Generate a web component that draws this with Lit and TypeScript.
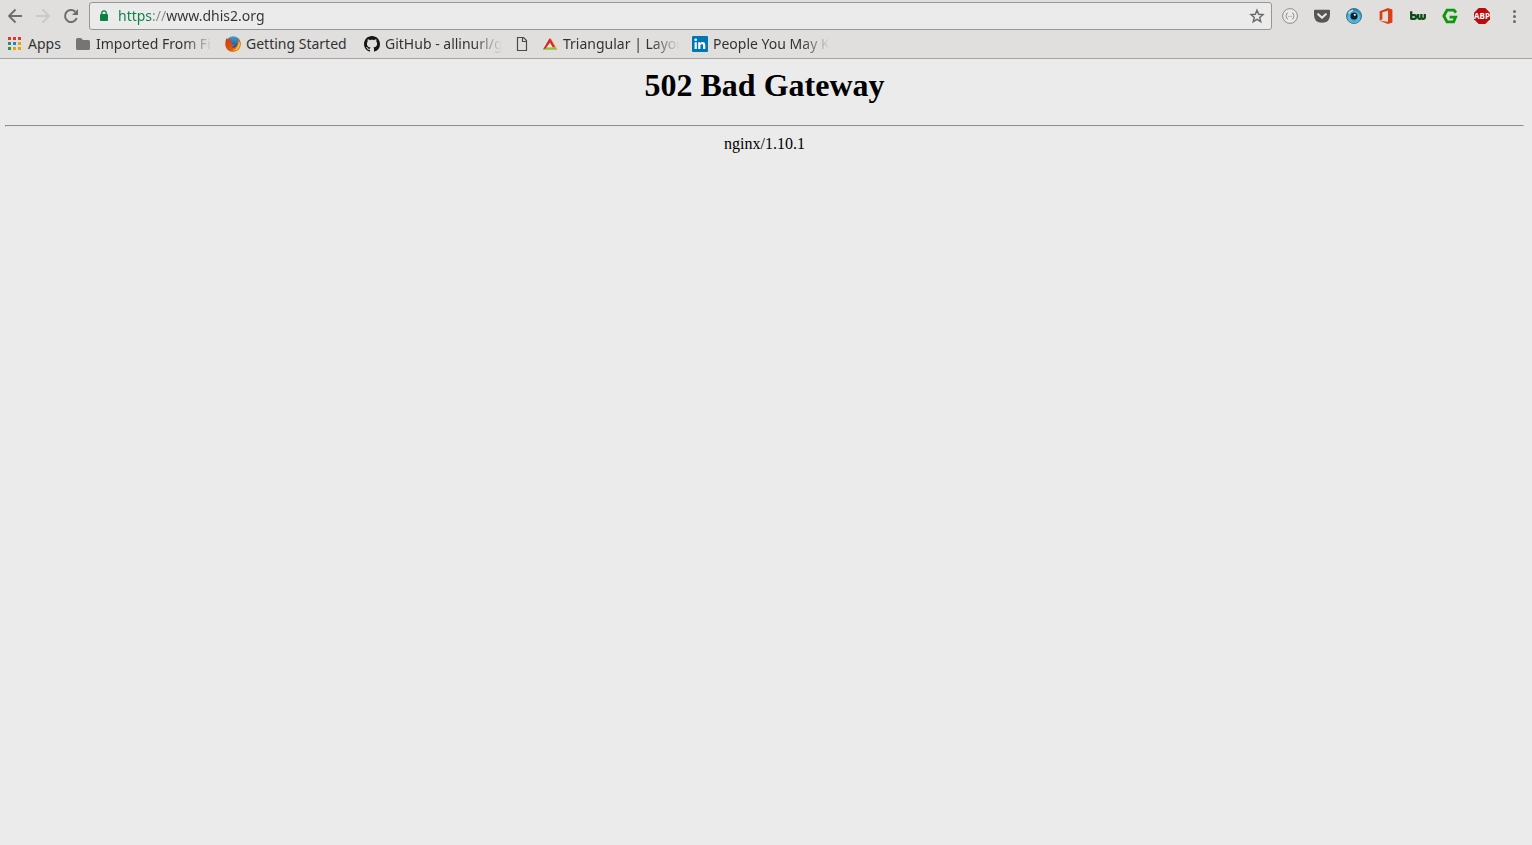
import { LitElement, html, css, svg, nothing, TemplateResult } from "lit";
import { customElement, property } from "lit/decorators.js";

const icon = (body: unknown, size = 16) =>
  html`<svg width=${size} height=${size} viewBox="0 0 ${size} ${size}" aria-hidden="true">${body}</svg>`;

const back = icon(svg`<path d="M15 8H2.2M8.5 1.5L2 8L8.5 14.5" fill="none" stroke="#6e6e6e" stroke-width="1.9"/>`);
const forward = icon(svg`<path d="M1 8H13.8M7.5 1.5L14 8L7.5 14.5" fill="none" stroke="#cbc9c8" stroke-width="1.9"/>`);
const reload = icon(svg`
  <path d="M13.7 10A6 6 0 1 1 12.3 3.8" fill="none" stroke="#6e6e6e" stroke-width="2"/>
  <path d="M15 1V7H9Z" fill="#6e6e6e"/>`);
const lock = icon(svg`
  <rect x="4" y="6" width="8" height="7" rx="1" fill="#0b8043"/>
  <path d="M5.8 6.5V5a2.2 2.2 0 0 1 4.4 0V6.5" fill="none" stroke="#0b8043" stroke-width="1.3"/>`);
const star = icon(svg`<path d="M8 2.2L9.7 6.3L14 6.6L10.7 9.4L11.8 13.7L8 11.4L4.2 13.7L5.3 9.4L2 6.6L6.3 6.3Z" fill="none" stroke="#6a6a6a" stroke-width="1.4"/>`);

const apps = icon(svg`
  ${["#e4352b", "#e4352b", "#e4352b", "#2a9352", "#1a82e2", "#eda200", "#2a9352", "#eda200", "#eda200"].map(
    (c, i) => svg`<rect x=${1 + (i % 3) * 5} y=${1 + Math.floor(i / 3) * 5} width="3" height="3" fill=${c}/>`
  )}`);
const folder = icon(svg`<path d="M1 3.5Q1 2 2.5 2H6L8 4H13.5Q15 4 15 5.5V12.5Q15 14 13.5 14H2.5Q1 14 1 12.5Z" fill="#757575"/>`);
const firefox = icon(svg`
  <defs>
    <linearGradient id="fx" x1="0" y1="0" x2="1" y2="1"><stop offset="0" stop-color="#c93a10"/><stop offset=".6" stop-color="#e05a17"/><stop offset="1" stop-color="#f6a624"/></linearGradient>
    <linearGradient id="globe" x1="0" y1="0" x2="0" y2="1"><stop offset="0" stop-color="#3f9fd8"/><stop offset="1" stop-color="#123f82"/></linearGradient>
  </defs>
  <circle cx="8.2" cy="7.4" r="7.2" fill="url(#globe)"/>
  <path d="M1.5 2.2L3 3.6Q4.4 2.8 6 3.3L7.5 4.8L5.6 6.3L6.3 8Q8 9.2 9.8 8.6Q8.6 11.3 6 10.6Q8 12.6 10.7 10.9Q13.4 9 12.4 5.4L13.6 6.4Q13.6 4 12.4 2.2Q16 4.7 15.8 9Q15 15.4 8.2 16Q1.2 15.5.2 9Q.1 5 1.5 2.2Z" fill="url(#fx)"/>
  <path d="M13.8 4.3Q15.8 7.6 14.2 11Q12 14.6 8 14.5Q13.6 12.4 13.8 4.3Z" fill="#fbc52e"/>`);
const github = icon(svg`<path fill="#161414" d="M8 0C3.58 0 0 3.58 0 8c0 3.54 2.29 6.53 5.47 7.59.4.07.55-.17.55-.38 0-.19-.01-.82-.01-1.49-2.01.37-2.53-.49-2.69-.94-.09-.23-.48-.94-.82-1.13-.28-.15-.68-.52-.01-.53.63-.01 1.08.58 1.23.82.72 1.21 1.87.87 2.33.66.07-.52.28-.87.51-1.07-1.78-.2-3.64-.89-3.64-3.95 0-.87.31-1.59.82-2.15-.08-.2-.36-1.02.08-2.12 0 0 .67-.21 2.2.82.64-.18 1.32-.27 2-.27s1.36.09 2 .27c1.53-1.04 2.2-.82 2.2-.82.44 1.1.16 1.92.08 2.12.51.56.82 1.27.82 2.15 0 3.07-1.87 3.75-3.65 3.95.29.25.54.73.54 1.48 0 1.07-.01 1.93-.01 2.2 0 .21.15.46.55.38A8.01 8.01 0 0 0 16 8c0-4.42-3.58-8-8-8z"/>`);
const page = icon(svg`<path d="M3.5 1.5H9.5L12.5 4.5V14.5H3.5ZM8.5 1.5V5.5H12.5" fill="none" stroke="#4a4a4a" stroke-width="1.2"/>`);
const triangle = icon(svg`
  <path d="M6.8 2.5H9L15.4 13.6H11.8L7.6 6Z" fill="#f0a030"/>
  <path d="M1 13.8L2.8 11.2H12.5L15 13.8Z" fill="#8cc43c"/>
  <path d="M7.4 2.5L1 13.4L4 12L8 6.4L10.7 11H13L8.8 3.6Z" fill="#de2328"/>
  <path d="M8 7.2L5.4 11.2H10.4Z" fill="#e7e3dd"/>`);
const linkedin = icon(svg`
  <rect width="16" height="16" rx="1" fill="#0077b5"/>
  <path d="M2.6 6.2H4.8V13H2.6ZM6.2 6.2H8.3V7.2Q9 6 10.5 6Q13.3 6 13.3 9.2V13H11.1V9.6Q11.1 7.9 9.9 7.9Q8.4 7.9 8.4 9.6V13H6.2Z" fill="#fff"/>
  <circle cx="3.7" cy="3.8" r="1.3" fill="#fff"/>`);

const braces = icon(svg`
  <circle cx="8" cy="8" r="7.4" fill="#ebeaea" stroke="#8d8d8d"/>
  <path d="M5.8 5Q4.6 5 4.6 6V7.2L3.6 8L4.6 8.8V10Q4.6 11 5.8 11M10.2 5Q11.4 5 11.4 6V7.2L12.4 8L11.4 8.8V10Q11.4 11 10.2 11M6.4 8.4H7.4M8.6 8.4H9.6" fill="none" stroke="#8d8d8d"/>`);
const pocket = icon(svg`
  <path d="M0 2.8Q0 1.8 1 1.8H15Q16 1.8 16 2.8V7Q16 14.6 8 14.8Q0 14.6 0 7Z" fill="#565656"/>
  <path d="M4.2 6.2L8 9.8L11.8 6.2" fill="none" stroke="#e6e5e4" stroke-width="2.2" stroke-linecap="round" stroke-linejoin="round"/>`);
const eye = icon(svg`
  <defs><radialGradient id="iris" cx=".5" cy=".65" r=".6"><stop offset="0" stop-color="#2d86b0"/><stop offset=".55" stop-color="#5ec3e6"/><stop offset="1" stop-color="#2d7ba5"/></radialGradient></defs>
  <circle cx="8" cy="8" r="7.5" fill="url(#iris)" stroke="#3d7590"/>
  <circle cx="8" cy="8" r="3.6" fill="#10212c"/>
  <circle cx="8.8" cy="6.8" r="1.1" fill="#e5f1f7"/>
  <path d="M2.5 5.6Q3.8 2.8 7 2.2" fill="none" stroke="#b9e5f4" stroke-width="1.6"/>`);
const office = icon(svg`<path d="M10 0L14.4 1.4V14.5L10 16L1.6 12.8L10 13.8V2.8L4.4 4.2V11.4L1.6 12.6V3.2Z" fill="#dc3e15"/>`);
const bw = icon(svg`
  <path d="M1.2 3.2V11.5M1.2 7.2H4.6Q6 7.2 6 8.4V9.6Q6 10.8 4.6 10.8H1.2M8.2 6V9.6Q8.2 10.8 9.4 10.8H10.2Q11.4 10.8 11.4 9.6V6M11.4 9.6Q11.4 10.8 12.6 10.8H13.4Q14.8 10.8 14.8 9.6V6" fill="none" stroke="#0d4a16" stroke-width="2.3"/>`);
const greenG = icon(svg`
  <path d="M14 4.6L12 2.2H5L1.8 8L5 13.8H11.6L13.6 9.2H7.6" fill="none" stroke="#0b980b" stroke-width="2.8"/>`);
const abp = icon(svg`
  <path d="M4.7 0H11.3L16 4.7V11.3L11.3 16H4.7L0 11.3V4.7Z" fill="#bd0b0b"/>
  <text x="8" y="10.9" text-anchor="middle" font-family="Open Sans, sans-serif" font-size="8" font-weight="700" fill="#fff">ABP</text>`);
const menu = icon(svg`<g fill="#6a6a6a"><circle cx="8.5" cy="3.5" r="1.5"/><circle cx="8.5" cy="8.5" r="1.5"/><circle cx="8.5" cy="13.5" r="1.5"/></g>`);

interface Bookmark {
  label: string;
  title?: string;
  icon: TemplateResult;
  size?: "short" | "medium" | "long";
}

const bookmarks: Bookmark[] = [
  { label: "Apps", icon: apps, size: "short" },
  { label: "Imported From Fi", icon: folder, size: "long" },
  { label: "Getting Started", icon: firefox, size: "medium" },
  { label: "GitHub - allinurl/g", icon: github, size: "long" },
  { label: "", title: "Untitled page", icon: page },
  { label: "Triangular | Layou", icon: triangle, size: "long" },
  { label: "People You May K", icon: linkedin, size: "long" },
];

const extensions: [string, TemplateResult][] = [
  ["JSON viewer", braces],
  ["Save to Pocket", pocket],
  ["Eye", eye],
  ["Office", office],
  ["BuiltWith", bw],
  ["Grammar", greenG],
  ["Adblock Plus", abp],
  ["Menu", menu],
];

@customElement("browser-toolbar")
export class BrowserToolbar extends LitElement {
  @property() url = "";

  static styles = css`
    :host {
      display: flex;
      align-items: center;
      height: 32px;
      padding: 0 2px 0 1px;
    }
    button {
      display: grid;
      place-items: center;
      flex: none;
      height: 28px;
      padding: 0;
      border: 0;
      background: none;
    }
    .nav {
      width: 28px;
    }
    .ext {
      width: 32px;
    }
    .address {
      display: flex;
      flex: 1;
      align-items: center;
      box-sizing: border-box;
      height: 28px;
      min-width: 0;
      margin: 0 2px 0 4px;
      padding: 0 6px;
      border: 1px solid #979695;
      border-radius: 3px;
      background: #ebebeb;
    }
    .address svg {
      flex: none;
    }
    .url {
      flex: 1;
      min-width: 0;
      height: 24px;
      margin-left: 6px;
      padding: 0;
      border: 0;
      outline: 0;
      font: 14px/24px "Noto Sans", sans-serif;
      color: transparent;
      caret-color: #333;
      background: linear-gradient(90deg, #0b8043 35px, #8a8a8a 35px 48px, #333 48px);
      background-clip: text;
    }
    .star {
      width: 16px;
    }
  `;

  render() {
    return html`
      <button class="nav" aria-label="Back">${back}</button>
      <button class="nav" aria-label="Forward" disabled>${forward}</button>
      <button class="nav" aria-label="Reload">${reload}</button>
      <div class="address">
        ${lock}
        <input class="url" type="text" aria-label="Address" spellcheck="false" .value=${this.url} />
        <button class="star" aria-label="Bookmark this page">${star}</button>
      </div>
      ${extensions.map(([name, glyph]) => html`<button class="ext" aria-label=${name}>${glyph}</button>`)}
    `;
  }
}

@customElement("bookmarks-bar")
export class BookmarksBar extends LitElement {
  static styles = css`
    :host {
      display: flex;
      align-items: center;
      gap: 12px;
      height: 26px;
      padding: 0 7px;
      border-bottom: 1px solid #a5a4a4;
    }
    a {
      display: flex;
      flex: none;
      align-items: center;
      gap: 5px;
      height: 24px;
      margin-bottom: 2px;
      color: #333;
      font: 14px/24px "Noto Sans", sans-serif;
      text-decoration: none;
      white-space: nowrap;
    }
    .short {
      width: 35px;
    }
    .medium {
      width: 106px;
    }
    .long {
      width: 117px;
      mask-image: linear-gradient(90deg, #000 88px, transparent 117px);
    }
  `;

  render() {
    return bookmarks.map(
      (b) => html`
        <a href="#" aria-label=${b.title ?? b.label}>
          ${b.icon}${b.label ? html`<span class=${b.size}>${b.label}</span>` : nothing}
        </a>
      `
    );
  }
}

@customElement("app-root")
export class AppRoot extends LitElement {
  static styles = css`
    :host {
      display: flex;
      flex-direction: column;
      min-height: 100vh;
      background: #ebebeb;
    }
    header {
      background: #e0dfde;
    }
    main {
      padding: 8px 8px 8px 5px;
      color: #000;
      font: 16px/18px "Liberation Serif", serif;
      text-align: center;
    }
    h1 {
      margin: 0 0 21px;
      font-size: 32px;
      line-height: 37px;
    }
    hr {
      margin: 0 0 8px;
      border: 1px solid;
      border-color: #8f8f8f #e6e6e6 #e6e6e6 #8f8f8f;
    }
    p {
      margin: 0;
    }
  `;

  render() {
    return html`
      <header>
        <browser-toolbar url="https://www.dhis2.org"></browser-toolbar>
        <bookmarks-bar></bookmarks-bar>
      </header>
      <main>
        <h1>502 Bad Gateway</h1>
        <hr />
        <p>nginx/1.10.1</p>
      </main>
    `;
  }
}
